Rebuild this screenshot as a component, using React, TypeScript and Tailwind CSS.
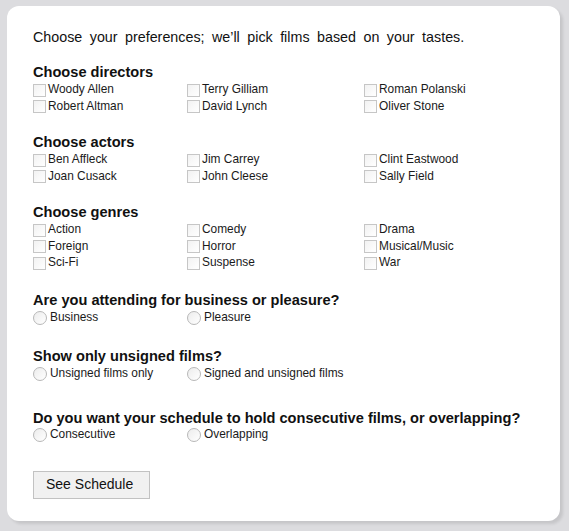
import React from "react";

const font = { fontFamily: '"Liberation Sans", Arial, sans-serif' };

function Check({ label }: { label: string }) {
  return (
    <div className="flex items-center h-[16.5px]">
      <span className="w-[13px] h-[13px] border border-[#c6c6c6] bg-gradient-to-br from-[#f2f2f2] to-white shrink-0" />
      <span className="ml-[2px] text-[11.9px] leading-none text-[#1a1a1a]">{label}</span>
    </div>
  );
}

function Radio({ label }: { label: string }) {
  return (
    <div className="flex items-center">
      <span className="w-[14px] h-[14px] rounded-full border border-[#b8b8b8] bg-gradient-to-br from-[#ececec] to-white shrink-0" />
      <span className="ml-[3px] text-[11.9px] leading-none text-[#1a1a1a]">{label}</span>
    </div>
  );
}

function CheckGrid({ cols }: { cols: string[][] }) {
  return (
    <div className="grid grid-cols-[154px_177px_1fr] pt-[1px]">
      {cols.map((c, i) => (
        <div key={i} className="flex flex-col">
          {c.map((l) => (
            <Check key={l} label={l} />
          ))}
        </div>
      ))}
    </div>
  );
}

function RadioRow({ a, b, h }: { a: string; b: string; h: string }) {
  return (
    <div className={`grid grid-cols-[154px_1fr] items-center ${h}`}>
      <Radio label={a} />
      <Radio label={b} />
    </div>
  );
}

function Heading({ children, mt }: { children: React.ReactNode; mt: string }) {
  return (
    <div className={`${mt} h-[18px] leading-[18px] text-[14.6px] font-bold text-[#111]`}>{children}</div>
  );
}

export default function App() {
  return (
    <div className="w-[569px] h-[531px] bg-[#dcdcdf] pt-[6px] pl-[7px]" style={font}>
      <div className="w-[553px] h-[515px] bg-white rounded-[12px] pl-[26px] pt-[23px] flex flex-col shadow-[3px_3px_3px_rgba(0,0,0,0.1)]">
        <div className="h-[16px] leading-[16px] text-[14.3px] [word-spacing:3.5px] text-[#111]">
          Choose your preferences; we’ll pick films based on your tastes.
        </div>

        <Heading mt="mt-[18px]">Choose directors</Heading>
        <CheckGrid
          cols={[
            ["Woody Allen", "Robert Altman"],
            ["Terry Gilliam", "David Lynch"],
            ["Roman Polanski", "Oliver Stone"],
          ]}
        />

        <Heading mt="mt-[18px]">Choose actors</Heading>
        <CheckGrid
          cols={[
            ["Ben Affleck", "Joan Cusack"],
            ["Jim Carrey", "John Cleese"],
            ["Clint Eastwood", "Sally Field"],
          ]}
        />

        <Heading mt="mt-[18px]">Choose genres</Heading>
        <CheckGrid
          cols={[
            ["Action", "Foreign", "Sci-Fi"],
            ["Comedy", "Horror", "Suspense"],
            ["Drama", "Musical/Music", "War"],
          ]}
        />

        <Heading mt="mt-[19px]">Are you attending for business or pleasure?</Heading>
        <RadioRow a="Business" b="Pleasure" h="h-[18px]" />

        <Heading mt="mt-[20px]">Show only unsigned films?</Heading>
        <RadioRow a="Unsigned films only" b="Signed and unsigned films" h="h-[18px]" />

        <Heading mt="mt-[26px]">Do you want your schedule to hold consecutive films, or overlapping?</Heading>
        <RadioRow a="Consecutive" b="Overlapping" h="h-[17px]" />

        <div className="mt-[27px]">
          <button className="w-[117px] h-[28px] border border-[#c2c2c2] bg-[#f1f1f1] text-[14px] text-[#111] text-left pl-[12px]">
            See Schedule
          </button>
        </div>
      </div>
    </div>
  );
}
